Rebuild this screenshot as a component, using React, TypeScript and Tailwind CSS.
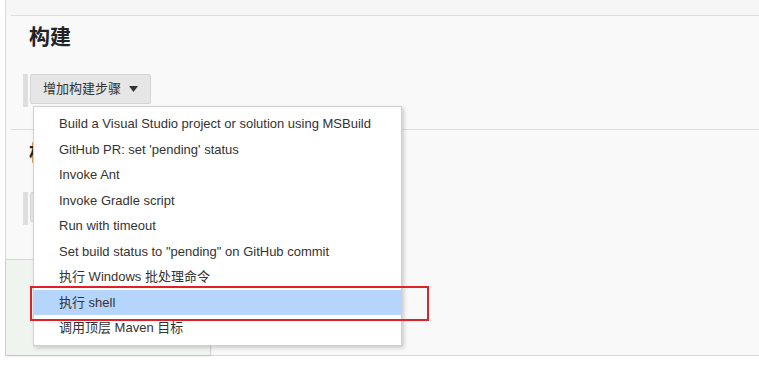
import { useState } from "react"

const steps = [
  "Build a Visual Studio project or solution using MSBuild",
  "GitHub PR: set 'pending' status",
  "Invoke Ant",
  "Invoke Gradle script",
  "Run with timeout",
  'Set build status to "pending" on GitHub commit',
  "执行 Windows 批处理命令",
  "执行 shell",
  "调用顶层 Maven 目标",
]

function Caret() {
  return (
    <svg width="9" height="6" viewBox="0 0 9 6" className="ml-2">
      <path d="M0 0h9L4.5 6z" fill="#333" />
    </svg>
  )
}

export default function App() {
  const [active] = useState(7)

  return (
    <div
      className="relative w-[759px] h-[379px] overflow-hidden bg-white text-[#333]"
      style={{ fontFamily: '"Liberation Sans", "Noto Sans CJK SC", sans-serif' }}
    >
      {/* page body */}
      <div className="ml-[5px] h-[356px] border-l border-b border-[#d9d9d9] bg-[#f9f9f9] flex flex-col">
        <div className="h-[15px] bg-[#f6f6f6]" />

        <section className="ml-[5px] h-[114px] border-t border-[#dcdcdc]">
          <h2 className="pl-[18px] pt-[8px] text-[21px] font-bold leading-[26px] text-[#222]">构建</h2>
          <div className="mt-[24px] ml-[12px] flex items-stretch">
            <div className="w-[5px] h-[33px] bg-[#dedede]" />
            <button className="ml-[2px] h-[30px] px-[12px] flex items-center bg-[#e6e6e6] border border-[#d4d4d4] rounded-[2px] text-[13px] text-[#333]">
              增加构建步骤
              <Caret />
            </button>
          </div>
        </section>

        <section className="ml-[5px] h-[130px] border-t border-[#dcdcdc]">
          <h2 className="pl-[18px] pt-[10px] text-[21px] font-bold leading-[26px] text-[#222]">构建后操作</h2>
          <div className="mt-[26px] ml-[12px] flex items-stretch">
            <div className="w-[5px] h-[33px] bg-[#dedede]" />
            <button className="ml-[2px] h-[30px] px-[12px] flex items-center bg-[#e6e6e6] border border-[#d4d4d4] rounded-[2px] text-[13px] text-[#333]">
              增加构建后操作步骤
              <Caret />
            </button>
          </div>
        </section>

        <div className="flex-1 flex">
          <div className="w-[205px] border-t border-r border-[#d6d6d6] bg-[#eff4ee] shadow-[0_1px_2px_rgba(0,0,0,0.15)]" />
        </div>
      </div>

      {/* dropdown menu */}
      <div className="absolute left-[33px] top-[106px] w-[369px] py-[4px] bg-white border border-[#d0d0d0] shadow-[2px_2px_4px_rgba(0,0,0,0.18)]">
        {steps.map((s, i) => (
          <div
            key={s}
            className={`h-[25.5px] pl-[25px] flex items-center text-[13px] whitespace-nowrap ${
              i === active ? "bg-[#b5d5fc]" : ""
            }`}
          >
            {s}
          </div>
        ))}
      </div>

      {/* red annotation box */}
      <div className="absolute left-[30px] top-[286px] w-[399px] h-[35px] border-2 border-[#e0202a]" />
    </div>
  )
}
